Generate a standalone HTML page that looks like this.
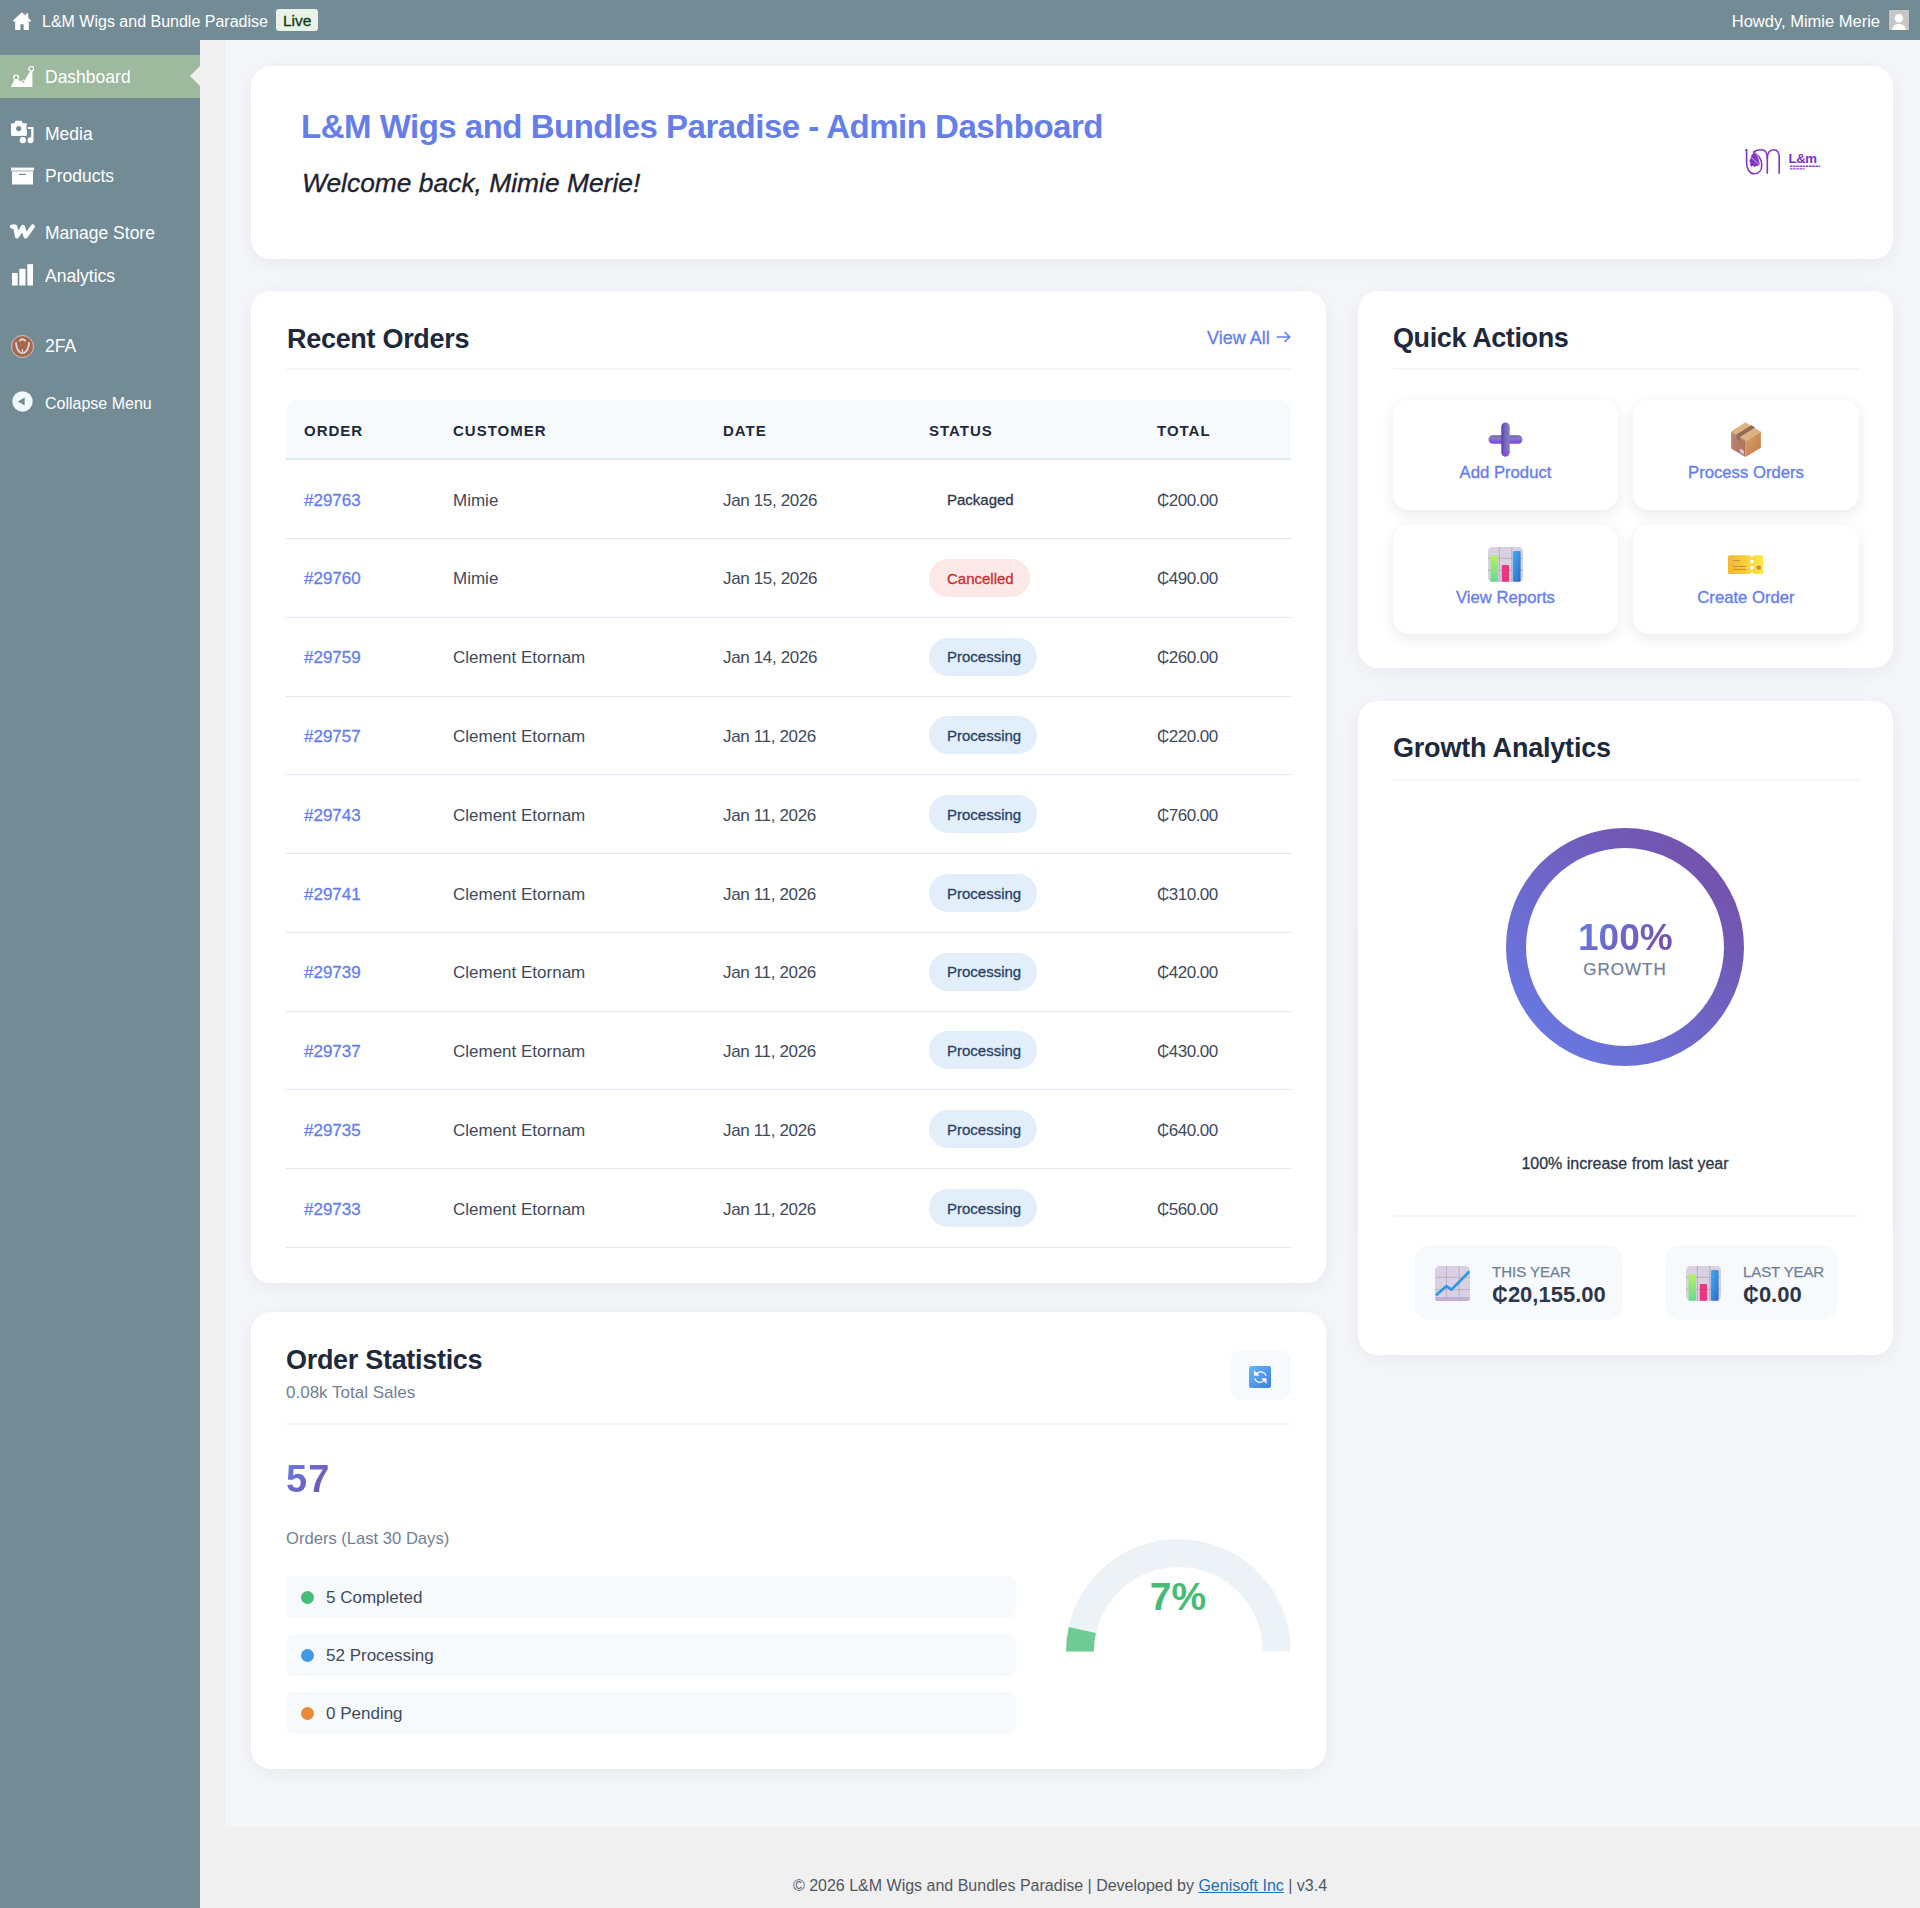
<!DOCTYPE html>
<html><head><meta charset="utf-8">
<style>
*{box-sizing:border-box;margin:0;padding:0}
html,body{width:1920px;height:1908px;overflow:hidden}
body{font-family:"Liberation Sans",sans-serif;background:#f0f0f1;position:relative;color:#2d3748}
.abs{position:absolute}
#adminbar{left:0;top:0;width:1920px;height:40px;background:#738b95}
#sidebar{left:0;top:40px;width:200px;height:1868px;background:#738b95}
#wrap{left:225px;top:40px;width:1695px;height:1787px;background:#f5f6fa}
.card{position:absolute;background:#fff;border-radius:20px;box-shadow:0 4px 20px rgba(20,30,60,0.06)}
.sm{font-size:17.5px;color:#fff;margin-top:1px}
.sm2{font-size:16px;color:#fff}
.t{position:absolute;white-space:nowrap;line-height:1}
</style></head>
<body>
<div id="adminbar" class="abs">
  <svg class="abs" style="left:12px;top:11px" width="20" height="20" viewBox="0 0 20 20"><path fill="#fff" d="M10 1.2 0.8 9.6 2.2 11 3.2 10.1V19h5.4v-5.6h2.8V19h5.4V10.1l1 .9 1.4-1.4-3-2.7V2.6h-2.4v2.1z"/><rect x="8.6" y="13.4" width="2.8" height="5.6" fill="#738b95"/></svg>
  <span class="t" id="ab-title" style="left:42px;top:13.5px;font-size:16px;color:#fff">L&amp;M Wigs and Bundle Paradise</span>
  <span class="abs" style="left:276px;top:9px;width:42px;height:22px;background:#e9f2e7;border-radius:3px"></span>
  <span class="t" id="ab-live" style="left:283px;top:12.8px;font-size:15.5px;color:#0f3b12;-webkit-text-stroke:0.3px #0f3b12">Live</span>
  <span class="t" id="ab-howdy" style="right:40px;top:13px;font-size:16.5px;color:#fff">Howdy, Mimie Merie</span>
  <span class="abs" style="left:1888px;top:9px;width:22px;height:22px;background:#6e8791"></span>
  <svg class="abs" style="left:1889px;top:10px" width="20" height="20" viewBox="0 0 20 20"><rect width="20" height="20" fill="#c6c6c6"/><circle cx="10" cy="8.3" r="4.2" fill="#fff"/><path d="M3 20c.4-4.2 3.3-6 7-6s6.6 1.8 7 6z" fill="#fff"/></svg>
</div>
<div id="sidebar" class="abs">
  <div class="abs" style="left:0;top:15px;width:200px;height:43px;background:#9db99e"></div>
  <div class="abs" style="left:190px;top:26px;width:0;height:0;border-top:10px solid transparent;border-bottom:10px solid transparent;border-right:10px solid #f0f0f1"></div>
  <svg class="abs" style="left:10px;top:25px" width="24" height="24" viewBox="0 0 24 24"><path fill="#fff" d="M1 22 4.6 14 6.4 13.4 12.4 17.4 13.6 17 20 6.4 22.4 6.4 22.4 22z"/><circle cx="6.1" cy="12.6" r="2.4" fill="#9db99e" stroke="#fff" stroke-width="1.3"/><circle cx="13.4" cy="16.6" r="1.5" fill="#9db99e" stroke="#fff" stroke-width="1"/><circle cx="21.3" cy="3.8" r="2.4" fill="#9db99e" stroke="#fff" stroke-width="1.3"/></svg>
  <span class="t sm" style="left:45px;top:28px">Dashboard</span>

  <svg class="abs" style="left:11px;top:80px" width="24" height="26" viewBox="0 0 24 26"><path fill="#fff" d="M1.4 3.2H3.6L4.4 0.8H10.8L11.6 3.2H14.6A1.4 1.4 0 0 1 16 4.6V14.6A1.4 1.4 0 0 1 14.6 16H1.4A1.4 1.4 0 0 1 0 14.6V4.6A1.4 1.4 0 0 1 1.4 3.2z"/><circle cx="7.7" cy="8.6" r="2.6" fill="#738b95"/><g stroke="#738b95" stroke-width="1.4"><path fill="#fff" d="M16.2 6.3H23.2V20.2A3.7 3.7 0 1 1 19.5 16.5V9.6H16.2z"/><circle cx="11.8" cy="20.2" r="3.8" fill="#fff"/></g></svg>
  <span class="t sm" style="left:45px;top:85px">Media</span>

  <svg class="abs" style="left:11px;top:127px" width="23" height="18" viewBox="0 0 23 18"><rect x="0" y="0.6" width="23" height="3" fill="#fff"/><path fill="#fff" d="M1 4.3h21V17.5H1z"/><rect x="8" y="6.8" width="7" height="1.2" fill="#738b95"/></svg>
  <span class="t sm" style="left:45px;top:127px">Products</span>

  <svg class="abs" style="left:9px;top:183px" width="27" height="18" viewBox="0 0 27 18"><path d="M3 3.6H6.2L8 13.4 14 4 16.6 13.4 23.8 3.4" fill="none" stroke="#fff" stroke-width="4.2" stroke-linecap="round" stroke-linejoin="round"/></svg>
  <span class="t sm" style="left:45px;top:184px">Manage Store</span>

  <svg class="abs" style="left:12px;top:224px" width="21" height="22" viewBox="0 0 21 22"><rect x="0" y="9" width="5.7" height="12.5" fill="#fff"/><rect x="7.3" y="4.8" width="6.2" height="16.7" fill="#fff"/><rect x="15.3" y="0.2" width="5.7" height="21.3" fill="#fff"/></svg>
  <span class="t sm" style="left:45px;top:227px">Analytics</span>

  <svg class="abs" style="left:11px;top:295px" width="23" height="23" viewBox="0 0 23 23"><circle cx="11.5" cy="11.5" r="11" fill="#a9674b" stroke="#d6dee2" stroke-width="0.8"/><path fill="none" stroke="#d3dde2" stroke-width="1.8" d="M4.9 7.2C5.2 12.8 7.4 16.8 10.6 18.5M18.1 7.2C17.8 12.8 15.6 16.8 12.4 18.5M8.2 5.9 11.5 4.1 14.8 5.9"/><path stroke="#d3dde2" stroke-width="1.3" d="M11.5 14.2V19"/></svg>
  <span class="t sm" style="left:45px;top:297px">2FA</span>

  <svg class="abs" style="left:12px;top:351px" width="21" height="21" viewBox="0 0 21 21"><circle cx="10.5" cy="10.5" r="10.2" fill="#f2f9fc"/><path fill="#738b95" d="M6 10.6 12.6 6.6V14.6z"/></svg>
  <span class="t sm2" style="left:45px;top:356px">Collapse Menu</span>
</div>
<div id="wrap" class="abs"></div>

<div class="card" style="left:251px;top:66px;width:1642px;height:193px"></div>
<div class="card" style="left:251px;top:291px;width:1075px;height:992px"></div>
<div class="card" style="left:1358px;top:291px;width:535px;height:377px"></div>
<div class="abs" style="left:1358px;top:925px;width:535px;height:306px;box-shadow:0 0 14px rgba(20,30,60,0.035);clip-path:inset(0 -30px)"></div>
<div class="card" style="left:1358px;top:701px;width:535px;height:654px"></div>
<div class="card" style="left:251px;top:1312px;width:1075px;height:457px"></div>















<!--MAIN-->
<span class="t" style="left:710.0px;width:700px;text-align:center;top:1877.66px;font-size:16px;color:#50575e;">© 2026 L&amp;M Wigs and Bundles Paradise | Developed by <u style="color:#2271b1">Genisoft Inc</u> | v3.4</span>
<span class="t" style="left:301px;top:109.57px;font-size:33px;color:#667eea;font-weight:700;letter-spacing:-0.5px;">L&amp;M Wigs and Bundles Paradise - Admin Dashboard</span>
<span class="t" style="left:302px;top:169.95px;font-size:26.4px;color:#1f2330;-webkit-text-stroke:0.35px #1f2330;font-style:italic;">Welcome back, Mimie Merie!</span>
<span class="t" style="left:287px;top:325.64px;font-size:27px;color:#1e293b;font-weight:700;letter-spacing:-0.3px;">Recent Orders</span>
<span class="t" style="left:1207px;top:328.76px;font-size:18px;color:#667eea;-webkit-text-stroke:0.3px #667eea;">View All</span>
<svg class="abs" style="left:1276px;top:331px" width="15" height="12" viewBox="0 0 15 12"><path d="M0.5 6H13.5M8.5 1 13.8 6 8.5 11" fill="none" stroke="#667eea" stroke-width="1.6"/></svg>
<div class="abs" style="left:286px;top:368px;width:1005px;height:2px;background:#f4f7fa;border-radius:0px;"></div>
<div class="abs" style="left:286px;top:400px;width:1005px;height:60px;background:#f7fafc;border-radius:0px;border-radius:12px 12px 0 0;border-bottom:2px solid #e2e8f0"></div>
<span class="t" style="left:304px;top:423.10px;font-size:15px;color:#1e293b;font-weight:700;letter-spacing:1px;">ORDER</span>
<span class="t" style="left:453px;top:423.10px;font-size:15px;color:#1e293b;font-weight:700;letter-spacing:1px;">CUSTOMER</span>
<span class="t" style="left:723px;top:423.10px;font-size:15px;color:#1e293b;font-weight:700;letter-spacing:1px;">DATE</span>
<span class="t" style="left:929px;top:423.10px;font-size:15px;color:#1e293b;font-weight:700;letter-spacing:1px;">STATUS</span>
<span class="t" style="left:1157px;top:423.10px;font-size:15px;color:#1e293b;font-weight:700;letter-spacing:1px;">TOTAL</span>
<div class="abs" style="left:286px;top:538.0px;width:1005px;height:1.0px;background:#e2e8f0;border-radius:0px;"></div>
<span class="t" style="left:304px;top:491.61px;font-size:17px;color:#667eea;-webkit-text-stroke:0.3px #667eea;">#29763</span>
<span class="t" style="left:453px;top:491.61px;font-size:17px;color:#3f4a5a;">Mimie</span>
<span class="t" style="left:723px;top:491.61px;font-size:17px;color:#3f4a5a;letter-spacing:-0.35px;">Jan 15, 2026</span>
<span class="t" style="left:947px;top:492.30px;font-size:15px;color:#2d3748;-webkit-text-stroke:0.3px #2d3748;">Packaged</span>
<span class="t" style="left:1157px;top:491.61px;font-size:17px;color:#3f4a5a;letter-spacing:-0.5px;">₵200.00</span>
<div class="abs" style="left:286px;top:616.78px;width:1005px;height:1.0px;background:#e2e8f0;border-radius:0px;"></div>
<span class="t" style="left:304px;top:570.39px;font-size:17px;color:#667eea;-webkit-text-stroke:0.3px #667eea;">#29760</span>
<span class="t" style="left:453px;top:570.39px;font-size:17px;color:#3f4a5a;">Mimie</span>
<span class="t" style="left:723px;top:570.39px;font-size:17px;color:#3f4a5a;letter-spacing:-0.35px;">Jan 15, 2026</span>
<div class="abs" style="left:929px;top:558.78px;width:101px;height:38.0px;background:#fde8e8;border-radius:19px;"></div>
<span class="t" style="left:947px;top:570.58px;font-size:15px;color:#c53030;-webkit-text-stroke:0.3px #c53030;">Cancelled</span>
<span class="t" style="left:1157px;top:570.39px;font-size:17px;color:#3f4a5a;letter-spacing:-0.5px;">₵490.00</span>
<div class="abs" style="left:286px;top:695.56px;width:1005px;height:1.0px;background:#e2e8f0;border-radius:0px;"></div>
<span class="t" style="left:304px;top:649.17px;font-size:17px;color:#667eea;-webkit-text-stroke:0.3px #667eea;">#29759</span>
<span class="t" style="left:453px;top:649.17px;font-size:17px;color:#3f4a5a;">Clement Etornam</span>
<span class="t" style="left:723px;top:649.17px;font-size:17px;color:#3f4a5a;letter-spacing:-0.35px;">Jan 14, 2026</span>
<div class="abs" style="left:929px;top:637.56px;width:108px;height:38.0px;background:#e2eefa;border-radius:19px;"></div>
<span class="t" style="left:947px;top:649.36px;font-size:15px;color:#2a4365;-webkit-text-stroke:0.3px #2a4365;">Processing</span>
<span class="t" style="left:1157px;top:649.17px;font-size:17px;color:#3f4a5a;letter-spacing:-0.5px;">₵260.00</span>
<div class="abs" style="left:286px;top:774.33px;width:1005px;height:1.0px;background:#e2e8f0;border-radius:0px;"></div>
<span class="t" style="left:304px;top:727.94px;font-size:17px;color:#667eea;-webkit-text-stroke:0.3px #667eea;">#29757</span>
<span class="t" style="left:453px;top:727.94px;font-size:17px;color:#3f4a5a;">Clement Etornam</span>
<span class="t" style="left:723px;top:727.94px;font-size:17px;color:#3f4a5a;letter-spacing:-0.35px;">Jan 11, 2026</span>
<div class="abs" style="left:929px;top:716.33px;width:108px;height:38.0px;background:#e2eefa;border-radius:19px;"></div>
<span class="t" style="left:947px;top:728.14px;font-size:15px;color:#2a4365;-webkit-text-stroke:0.3px #2a4365;">Processing</span>
<span class="t" style="left:1157px;top:727.94px;font-size:17px;color:#3f4a5a;letter-spacing:-0.5px;">₵220.00</span>
<div class="abs" style="left:286px;top:853.11px;width:1005px;height:1.0px;background:#e2e8f0;border-radius:0px;"></div>
<span class="t" style="left:304px;top:806.72px;font-size:17px;color:#667eea;-webkit-text-stroke:0.3px #667eea;">#29743</span>
<span class="t" style="left:453px;top:806.72px;font-size:17px;color:#3f4a5a;">Clement Etornam</span>
<span class="t" style="left:723px;top:806.72px;font-size:17px;color:#3f4a5a;letter-spacing:-0.35px;">Jan 11, 2026</span>
<div class="abs" style="left:929px;top:795.11px;width:108px;height:38.0px;background:#e2eefa;border-radius:19px;"></div>
<span class="t" style="left:947px;top:806.91px;font-size:15px;color:#2a4365;-webkit-text-stroke:0.3px #2a4365;">Processing</span>
<span class="t" style="left:1157px;top:806.72px;font-size:17px;color:#3f4a5a;letter-spacing:-0.5px;">₵760.00</span>
<div class="abs" style="left:286px;top:931.89px;width:1005px;height:1.0px;background:#e2e8f0;border-radius:0px;"></div>
<span class="t" style="left:304px;top:885.50px;font-size:17px;color:#667eea;-webkit-text-stroke:0.3px #667eea;">#29741</span>
<span class="t" style="left:453px;top:885.50px;font-size:17px;color:#3f4a5a;">Clement Etornam</span>
<span class="t" style="left:723px;top:885.50px;font-size:17px;color:#3f4a5a;letter-spacing:-0.35px;">Jan 11, 2026</span>
<div class="abs" style="left:929px;top:873.89px;width:108px;height:38.0px;background:#e2eefa;border-radius:19px;"></div>
<span class="t" style="left:947px;top:885.69px;font-size:15px;color:#2a4365;-webkit-text-stroke:0.3px #2a4365;">Processing</span>
<span class="t" style="left:1157px;top:885.50px;font-size:17px;color:#3f4a5a;letter-spacing:-0.5px;">₵310.00</span>
<div class="abs" style="left:286px;top:1010.67px;width:1005px;height:1.0px;background:#e2e8f0;border-radius:0px;"></div>
<span class="t" style="left:304px;top:964.28px;font-size:17px;color:#667eea;-webkit-text-stroke:0.3px #667eea;">#29739</span>
<span class="t" style="left:453px;top:964.28px;font-size:17px;color:#3f4a5a;">Clement Etornam</span>
<span class="t" style="left:723px;top:964.28px;font-size:17px;color:#3f4a5a;letter-spacing:-0.35px;">Jan 11, 2026</span>
<div class="abs" style="left:929px;top:952.67px;width:108px;height:38.0px;background:#e2eefa;border-radius:19px;"></div>
<span class="t" style="left:947px;top:964.47px;font-size:15px;color:#2a4365;-webkit-text-stroke:0.3px #2a4365;">Processing</span>
<span class="t" style="left:1157px;top:964.28px;font-size:17px;color:#3f4a5a;letter-spacing:-0.5px;">₵420.00</span>
<div class="abs" style="left:286px;top:1089.44px;width:1005px;height:1.0px;background:#e2e8f0;border-radius:0px;"></div>
<span class="t" style="left:304px;top:1043.05px;font-size:17px;color:#667eea;-webkit-text-stroke:0.3px #667eea;">#29737</span>
<span class="t" style="left:453px;top:1043.05px;font-size:17px;color:#3f4a5a;">Clement Etornam</span>
<span class="t" style="left:723px;top:1043.05px;font-size:17px;color:#3f4a5a;letter-spacing:-0.35px;">Jan 11, 2026</span>
<div class="abs" style="left:929px;top:1031.44px;width:108px;height:38.0px;background:#e2eefa;border-radius:19px;"></div>
<span class="t" style="left:947px;top:1043.25px;font-size:15px;color:#2a4365;-webkit-text-stroke:0.3px #2a4365;">Processing</span>
<span class="t" style="left:1157px;top:1043.05px;font-size:17px;color:#3f4a5a;letter-spacing:-0.5px;">₵430.00</span>
<div class="abs" style="left:286px;top:1168.22px;width:1005px;height:1.0px;background:#e2e8f0;border-radius:0px;"></div>
<span class="t" style="left:304px;top:1121.83px;font-size:17px;color:#667eea;-webkit-text-stroke:0.3px #667eea;">#29735</span>
<span class="t" style="left:453px;top:1121.83px;font-size:17px;color:#3f4a5a;">Clement Etornam</span>
<span class="t" style="left:723px;top:1121.83px;font-size:17px;color:#3f4a5a;letter-spacing:-0.35px;">Jan 11, 2026</span>
<div class="abs" style="left:929px;top:1110.22px;width:108px;height:38.0px;background:#e2eefa;border-radius:19px;"></div>
<span class="t" style="left:947px;top:1122.02px;font-size:15px;color:#2a4365;-webkit-text-stroke:0.3px #2a4365;">Processing</span>
<span class="t" style="left:1157px;top:1121.83px;font-size:17px;color:#3f4a5a;letter-spacing:-0.5px;">₵640.00</span>
<div class="abs" style="left:286px;top:1247.0px;width:1005px;height:1.0px;background:#e2e8f0;border-radius:0px;"></div>
<span class="t" style="left:304px;top:1200.61px;font-size:17px;color:#667eea;-webkit-text-stroke:0.3px #667eea;">#29733</span>
<span class="t" style="left:453px;top:1200.61px;font-size:17px;color:#3f4a5a;">Clement Etornam</span>
<span class="t" style="left:723px;top:1200.61px;font-size:17px;color:#3f4a5a;letter-spacing:-0.35px;">Jan 11, 2026</span>
<div class="abs" style="left:929px;top:1189.0px;width:108px;height:38.0px;background:#e2eefa;border-radius:19px;"></div>
<span class="t" style="left:947px;top:1200.80px;font-size:15px;color:#2a4365;-webkit-text-stroke:0.3px #2a4365;">Processing</span>
<span class="t" style="left:1157px;top:1200.61px;font-size:17px;color:#3f4a5a;letter-spacing:-0.5px;">₵560.00</span>
<span class="t" style="left:1393px;top:325.44px;font-size:27px;color:#1e293b;font-weight:700;letter-spacing:-0.4px;">Quick Actions</span>
<div class="abs" style="left:1393px;top:368px;width:466px;height:2px;background:#f4f7fa;border-radius:0px;"></div>
<div class="abs" style="left:1393px;top:400px;width:225px;height:109.5px;background:#fff;border-radius:16px;box-shadow:0 4px 15px rgba(0,0,0,0.09)"></div>
<span class="t" style="left:1395.5px;width:220px;text-align:center;top:464.86px;font-size:16.7px;color:#667eea;-webkit-text-stroke:0.35px #667eea;">Add Product</span>
<div class="abs" style="left:1633px;top:400px;width:226px;height:109.5px;background:#fff;border-radius:16px;box-shadow:0 4px 15px rgba(0,0,0,0.09)"></div>
<span class="t" style="left:1636.0px;width:220px;text-align:center;top:464.86px;font-size:16.7px;color:#667eea;-webkit-text-stroke:0.35px #667eea;">Process Orders</span>
<div class="abs" style="left:1393px;top:525px;width:225px;height:109px;background:#fff;border-radius:16px;box-shadow:0 4px 15px rgba(0,0,0,0.09)"></div>
<span class="t" style="left:1395.5px;width:220px;text-align:center;top:589.86px;font-size:16.7px;color:#667eea;-webkit-text-stroke:0.35px #667eea;">View Reports</span>
<div class="abs" style="left:1633px;top:525px;width:226px;height:109px;background:#fff;border-radius:16px;box-shadow:0 4px 15px rgba(0,0,0,0.09)"></div>
<span class="t" style="left:1636.0px;width:220px;text-align:center;top:589.86px;font-size:16.7px;color:#667eea;-webkit-text-stroke:0.35px #667eea;">Create Order</span>
<span class="t" style="left:1393px;top:734.84px;font-size:27px;color:#1e293b;font-weight:700;letter-spacing:-0.2px;">Growth Analytics</span>
<div class="abs" style="left:1393px;top:779px;width:466px;height:2px;background:#f4f7fa;border-radius:0px;"></div>
<div class="abs" style="left:1506px;top:828px;width:238px;height:238px;border-radius:50%;background:linear-gradient(225deg,#764ba2,#667eea)"></div>
<div class="abs" style="left:1526px;top:848px;width:198px;height:198px;border-radius:50%;background:#fff"></div>
<span class="t" style="left:1578px;top:918.68px;font-size:37px;color:transparent;font-weight:700;background:linear-gradient(135deg,#667eea,#764ba2);-webkit-background-clip:text;background-clip:text;">100%</span>
<span class="t" style="left:1525.0px;width:200px;text-align:center;top:960.61px;font-size:17px;color:#718096;-webkit-text-stroke:0.25px #718096;letter-spacing:1px;">GROWTH</span>
<span class="t" style="left:1475.0px;width:300px;text-align:center;top:1156.16px;font-size:16px;color:#2d3748;-webkit-text-stroke:0.3px #2d3748;">100% increase from last year</span>
<div class="abs" style="left:1393px;top:1215px;width:466px;height:2px;background:#f4f7fa;border-radius:0px;"></div>
<div class="abs" style="left:1414px;top:1245px;width:209px;height:75px;background:#f7fafc;border-radius:16px;"></div>
<div class="abs" style="left:1665px;top:1245px;width:173px;height:75px;background:#f7fafc;border-radius:16px;"></div>
<span class="t" style="left:1492px;top:1263.90px;font-size:15px;color:#718096;-webkit-text-stroke:0.25px #718096;">THIS YEAR</span>
<span class="t" style="left:1492px;top:1283.88px;font-size:22px;color:#2d3748;font-weight:700;">₵20,155.00</span>
<span class="t" style="left:1743px;top:1263.90px;font-size:15px;color:#718096;-webkit-text-stroke:0.25px #718096;letter-spacing:-0.1px;">LAST YEAR</span>
<span class="t" style="left:1743px;top:1283.88px;font-size:22px;color:#2d3748;font-weight:700;">₵0.00</span>
<span class="t" style="left:286px;top:1347.14px;font-size:27px;color:#1e293b;font-weight:700;letter-spacing:-0.3px;">Order Statistics</span>
<span class="t" style="left:286px;top:1384.21px;font-size:17px;color:#718096;">0.08k Total Sales</span>
<div class="abs" style="left:1230px;top:1350px;width:61px;height:50px;background:#f7fafc;border-radius:12px;"></div>
<div class="abs" style="left:286px;top:1423px;width:1005px;height:2px;background:#f4f7fa;border-radius:0px;"></div>
<span class="t" style="left:286px;top:1459.83px;font-size:38px;color:transparent;font-weight:700;letter-spacing:1.2px;background:linear-gradient(135deg,#667eea,#764ba2);-webkit-background-clip:text;background-clip:text;">57</span>
<span class="t" style="left:286px;top:1530.95px;font-size:16.6px;color:#718096;">Orders (Last 30 Days)</span>
<div class="abs" style="left:286px;top:1576px;width:730px;height:42px;background:#f7fafc;border-radius:8px;"></div>
<div class="abs" style="left:301px;top:1590.7px;width:13px;height:13.0px;background:#48bb78;border-radius:6.5px;"></div>
<span class="t" style="left:326px;top:1589.11px;font-size:17px;color:#3f4a5a;">5 Completed</span>
<div class="abs" style="left:286px;top:1634px;width:730px;height:42px;background:#f7fafc;border-radius:8px;"></div>
<div class="abs" style="left:301px;top:1648.7px;width:13px;height:13.0px;background:#4299e1;border-radius:6.5px;"></div>
<span class="t" style="left:326px;top:1647.11px;font-size:17px;color:#3f4a5a;">52 Processing</span>
<div class="abs" style="left:286px;top:1692px;width:730px;height:42px;background:#f7fafc;border-radius:8px;"></div>
<div class="abs" style="left:301px;top:1706.7px;width:13px;height:13.0px;background:#ed8936;border-radius:6.5px;"></div>
<span class="t" style="left:326px;top:1705.11px;font-size:17px;color:#3f4a5a;">0 Pending</span>
<svg class="abs" style="left:0;top:0" width="1920" height="1908"><path fill="#edf2f7" d="M1068.71 1626.88A112.4 112.4 0 0 1 1290.80 1651.40L1262.90 1651.40A84.5 84.5 0 0 0 1095.94 1632.97Z"/><path fill="#6fcb93" d="M1066.00 1651.40A112.4 112.4 0 0 1 1068.71 1626.88L1095.94 1632.97A84.5 84.5 0 0 0 1093.90 1651.40Z"/></svg>
<span class="t" style="left:1078.0px;width:200px;text-align:center;top:1576.99px;font-size:39px;color:#48bb78;font-weight:700;">7%</span>
<svg class="abs" style="left:1488px;top:422px" width="35" height="35" viewBox="0 0 35 35"><defs><linearGradient id="ph" x1="0" y1="0" x2="0" y2="1"><stop offset="0" stop-color="#6a5aa8"/><stop offset=".35" stop-color="#8a7fc2"/><stop offset=".7" stop-color="#7a5ad8"/><stop offset="1" stop-color="#8a3ff0"/></linearGradient>
<linearGradient id="pv" x1="0" y1="0" x2="1" y2="0"><stop offset="0" stop-color="#5a3fb0"/><stop offset=".45" stop-color="#7766b8"/><stop offset="1" stop-color="#8a7dc8"/></linearGradient>
<linearGradient id="pvb" x1="0" y1="0" x2="0" y2="1"><stop offset=".8" stop-color="#8a3ff0" stop-opacity="0"/><stop offset="1" stop-color="#9440ff" stop-opacity=".8"/></linearGradient></defs>
<rect x="0.5" y="13.3" width="34" height="8.4" rx="4.2" fill="url(#ph)"/>
<rect x="13.3" y="0.5" width="8.4" height="34" rx="4.2" fill="url(#pv)"/>
<rect x="13.3" y="0.5" width="8.4" height="34" rx="4.2" fill="url(#pvb)"/></svg>
<svg class="abs" style="left:1728px;top:422px" width="35" height="35" viewBox="0 0 35 35"><defs><linearGradient id="bxr" x1="0" y1="0" x2="1" y2="1"><stop offset="0" stop-color="#d9a47a"/><stop offset="1" stop-color="#c27838"/></linearGradient>
<linearGradient id="bxl" x1="0" y1="0" x2="1" y2="1"><stop offset="0" stop-color="#b98a78"/><stop offset="1" stop-color="#ad6c50"/></linearGradient></defs>
<path d="M17.5 0.2 3.1 9.5 17.8 18.8 32.9 9.8z" fill="#ddb283"/>
<path d="M3.1 9.5 17.8 18.8 17.5 35 3.1 26.5z" fill="url(#bxl)"/>
<path d="M17.8 18.8 32.9 9.8 32.9 25.8 17.5 35z" fill="url(#bxr)"/>
<path d="M23.5 3.3 27 5.4 12.3 14.8 8.4 12.5z" fill="#956651"/>
<path d="M8.4 12.5 12.3 14.8 12.3 19.3 8.4 17.6z" fill="#8a7070"/>
<path d="M11.9 26.4 15.9 28.6 15.9 32.6 11.9 30.3z" fill="#d5c4e0"/></svg>
<svg class="abs" style="left:1488px;top:547px" width="35" height="35" viewBox="0 0 35 35"><defs><linearGradient id="cga" x1="0" y1="0" x2="0" y2="1"><stop offset="0" stop-color="#b4f25c"/><stop offset="1" stop-color="#62dd92"/></linearGradient>
<linearGradient id="cba" x1="0" y1="0" x2="1" y2="1"><stop offset="0" stop-color="#40b0f6"/><stop offset="1" stop-color="#2a68c8"/></linearGradient></defs>
<rect x="0" y="0" width="35" height="35" rx="4.5" fill="#d8d1e0"/>
<path d="M11.4 0v35M23.7 0v35M0 11.3h35M0 23.4h35" stroke="#b9adc4" stroke-width="1"/>
<rect x="2.6" y="8.2" width="7.4" height="26.6" rx="1.2" fill="url(#cga)"/>
<rect x="13.8" y="17.9" width="7.2" height="16.9" rx="1.2" fill="#e8377e"/>
<rect x="24.8" y="4" width="7.8" height="30.8" rx="1.2" fill="url(#cba)"/></svg>
<svg class="abs" style="left:1728px;top:555px" width="35" height="19" viewBox="0 0 35 19"><defs><linearGradient id="tk" x1="0" y1="0" x2="1" y2="0"><stop offset="0" stop-color="#f0b834"/><stop offset="1" stop-color="#fce944"/></linearGradient></defs>
<path d="M1.5 0.3H22.3A1.7 1.7 0 0 0 25.7 0.3H33.5A1.5 1.5 0 0 1 35 1.8V17.5A1.5 1.5 0 0 1 33.5 19H25.7A1.7 1.7 0 0 0 22.3 19H1.5A1.5 1.5 0 0 1 0 17.5V1.8A1.5 1.5 0 0 1 1.5 0.3z" fill="url(#tk)"/>
<circle cx="24" cy="6.7" r="1.9" fill="#fff"/><circle cx="24" cy="12.6" r="1.9" fill="#fff"/>
<path d="M5.3 5.6H11.6M5.3 11.5H17.8M5.3 14.4H17.8" stroke="#d4844a" stroke-width="1" stroke-linecap="round"/>
<rect x="28.7" y="10.7" width="4.2" height="3.9" rx=".6" fill="#d4844a"/></svg>
<svg class="abs" style="left:1435px;top:1266px" width="35" height="35" viewBox="0 0 35 35"><rect x="0" y="0" width="35" height="35" rx="4.5" fill="#d9d0e3"/>
<rect x="0" y="31" width="35" height="4" rx="2" fill="#b9a0d2" opacity=".7"/>
<path d="M11.5 0v35M24.1 0v35M0 11.3h35M0 23.6h35" stroke="#bdb0c8" stroke-width="1"/>
<path d="M0.9 29.2 11.3 20.2 16.5 23.6 34.4 5.4" fill="none" stroke="#2a97e6" stroke-width="2.7" stroke-linejoin="round"/></svg>
<svg class="abs" style="left:1686px;top:1266px" width="35" height="35" viewBox="0 0 35 35"><defs><linearGradient id="cgb" x1="0" y1="0" x2="0" y2="1"><stop offset="0" stop-color="#b4f25c"/><stop offset="1" stop-color="#62dd92"/></linearGradient>
<linearGradient id="cbb" x1="0" y1="0" x2="1" y2="1"><stop offset="0" stop-color="#40b0f6"/><stop offset="1" stop-color="#2a68c8"/></linearGradient></defs>
<rect x="0" y="0" width="35" height="35" rx="4.5" fill="#d8d1e0"/>
<path d="M11.4 0v35M23.7 0v35M0 11.3h35M0 23.4h35" stroke="#b9adc4" stroke-width="1"/>
<rect x="2.6" y="8.2" width="7.4" height="26.6" rx="1.2" fill="url(#cgb)"/>
<rect x="13.8" y="17.9" width="7.2" height="16.9" rx="1.2" fill="#e8377e"/>
<rect x="24.8" y="4" width="7.8" height="30.8" rx="1.2" fill="url(#cbb)"/></svg>
<svg class="abs" style="left:1249px;top:1366px" width="22" height="22" viewBox="0 0 22 22"><defs><linearGradient id="rf" x1="0" y1="0" x2="1" y2="1"><stop offset="0" stop-color="#62b6fa"/><stop offset="1" stop-color="#3f7fe2"/></linearGradient></defs>
<rect x="0" y="0" width="22" height="22" rx="2.2" fill="url(#rf)"/>
<path d="M5 4.2V9.8H10.6L8.6 7.9A4.6 4.6 0 0 1 16.3 9.8H17.6A6 6 0 0 0 7.6 6.8z" fill="#fff0fb"/>
<path d="M17.6 17.9V12.3H12L14 14.2A4.6 4.6 0 0 1 6.3 12.3H5A6 6 0 0 0 15 15.3z" fill="#fff0fb"/></svg>
<svg class="abs" style="left:1744px;top:149px" width="78" height="27" viewBox="0 0 78 27"><g fill="none" stroke="#8236c4" stroke-width="1.6">
<path d="M1.2 0.9H2.6V13C2.6 20 5.5 24.8 10.2 24.8 15 24.8 17.8 21 17.8 16 17.8 9 13 4.5 9 3.2"/>
<path d="M9.4 3.4C12 1 15 0.8 17.5 0.8 22 0.8 23.3 4.5 23.3 9.5V24.8"/>
<path d="M23.3 9.5C23.3 4 25.5 0.8 29.8 0.8 34 0.8 35.2 4.6 35.2 9V24.8"/>
</g>
<path d="M10.8 3.2C8 4.5 6.6 7 6.2 10.6L5.1 12.1 6.3 13.2 6.2 16.2 7.5 17.8 9 16.6 10.6 18 15.8 15.8C15 11 13.8 6 10.8 3.2z" fill="#8236c4"/>
<path d="M10.5 3.8 15 7.5M12 3.6 16 6.8" stroke="#fff" stroke-width=".5"/>
<path d="M7.2 8.2 14.6 15.2" stroke="#fff" stroke-width=".6"/>
<path d="M41.4 8.7V15.7" stroke="#d8c8ee" stroke-width=".6"/>
<text x="44.4" y="14.4" font-family="Liberation Sans" font-weight="700" font-size="13.2" fill="#7b2fc9" letter-spacing="-0.3">L&amp;m</text>
<path d="M45.8 17.3H76.2M45.8 19.9H60.5" stroke="#8a45d0" stroke-width="1.4" stroke-dasharray="2.6 .6"/></svg>
<!--/MAIN-->
</body></html>
